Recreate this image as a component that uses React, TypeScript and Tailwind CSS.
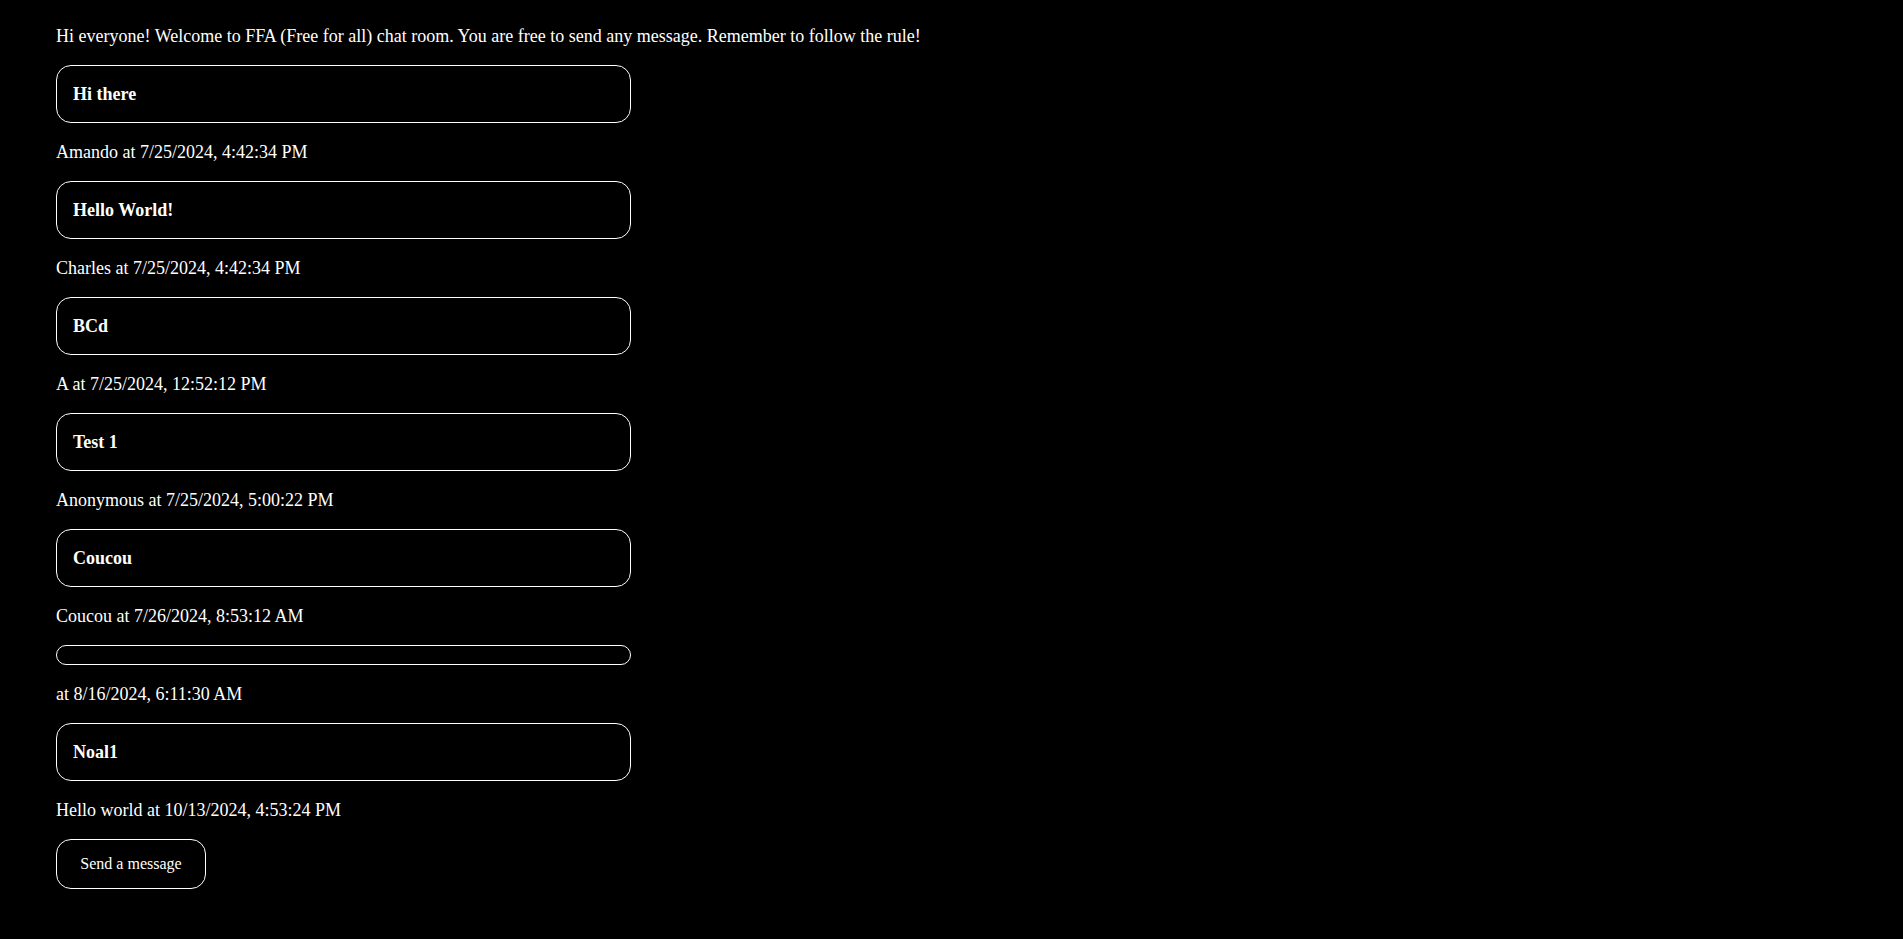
import React from 'react';

type Message = { text: string; author: string; date: string };

const messages: Message[] = [
  { text: 'Hi there', author: 'Amando', date: '7/25/2024, 4:42:34 PM' },
  { text: 'Hello World!', author: 'Charles', date: '7/25/2024, 4:42:34 PM' },
  { text: 'BCd', author: 'A', date: '7/25/2024, 12:52:12 PM' },
  { text: 'Test 1', author: 'Anonymous', date: '7/25/2024, 5:00:22 PM' },
  { text: 'Coucou', author: 'Coucou', date: '7/26/2024, 8:53:12 AM' },
  { text: '', author: '', date: '8/16/2024, 6:11:30 AM' },
  { text: 'Noal1', author: 'Hello world', date: '10/13/2024, 4:53:24 PM' },
];

function MessageItem({ msg }: { msg: Message }) {
  return (
    <div className="flex flex-col">
      {/* message bubble */}
      <div className="mt-[18px] w-[575px] border border-white rounded-[15px] px-[16px] py-[9px]">
        {msg.text && <p className="py-[8px] font-bold leading-[22px]">{msg.text}</p>}
      </div>
      <p className="mt-[18px] leading-[22px]">
        {msg.author ? `${msg.author} at ${msg.date}` : ` at ${msg.date}`}
      </p>
    </div>
  );
}

export default function App() {
  return (
    <div
      className="min-h-screen bg-black text-white text-[18px] px-[56px] pt-[25px] pb-[40px]"
      style={{ fontFamily: '"Liberation Serif", "Times New Roman", serif' }}
    >
      <p className="leading-[22px]">
        Hi everyone! Welcome to FFA (Free for all) chat room. You are free to send any message. Remember to follow the rule!
      </p>
      <div className="flex flex-col">
        {messages.map((m, i) => (
          <MessageItem key={i} msg={m} />
        ))}
      </div>
      <button className="mt-[18px] w-[150px] h-[50px] flex items-center justify-center border border-white rounded-[15px] bg-black text-white text-[16px] leading-[18px]">
        Send a message
      </button>
    </div>
  );
}
